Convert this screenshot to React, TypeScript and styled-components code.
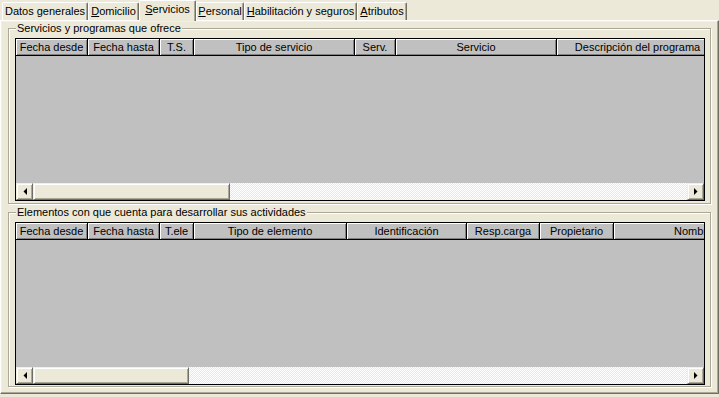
import React from "react";
import styled, { createGlobalStyle } from "styled-components";

const Global = createGlobalStyle`
  html, body { margin: 0; padding: 0; background: #ece9d8; }
  body { font-family: Tahoma, "Liberation Sans", "DejaVu Sans", sans-serif; font-size: 11px; color: #000; }
  * { box-sizing: border-box; }
`;

const Window = styled.div`
  width: 719px;
  height: 397px;
  display: flex;
  flex-direction: column;
  background: #ece9d8;
`;

const TabStrip = styled.div`
  height: 20px;
  display: flex;
  align-items: flex-end;
  padding-left: 2px;
  position: relative;
  z-index: 1;
`;

const Tab = styled.div<{ $w: number; $active?: boolean }>`
  width: ${(p) => p.$w}px;
  height: ${(p) => (p.$active ? 21 : 18)}px;
  margin-bottom: ${(p) => (p.$active ? -1 : 0)}px;
  background: #ece9d8;
  border-left: 1px solid #fff;
  border-top: 1px solid #fff;
  border-right: 1px solid #716f64;
  border-radius: 2px 2px 0 0;
  box-shadow: inset -1px 0 0 #aca899;
  display: flex;
  align-items: ${(p) => (p.$active ? "flex-start" : "center")};
  padding-top: ${(p) => (p.$active ? 2 : 0)}px;
  justify-content: center;
  white-space: nowrap;
  line-height: 13px;
`;

const TabLabel = styled.span`
  white-space: pre;
  u { text-decoration: underline; }
`;

const Panel = styled.div`
  flex: 1;
  margin-bottom: 3px;
  border-left: 1px solid #fff;
  border-top: 1px solid #fff;
  border-right: 1px solid #716f64;
  border-bottom: 1px solid #716f64;
  box-shadow: inset -1px -1px 0 #aca899, inset 1px 1px 0 #f1efe2;
  padding: 7px 0 0 7px;
  display: flex;
  flex-direction: column;
  gap: 8px;
`;

const Group = styled.div<{ $h: number }>`
  position: relative;
  width: 703px;
  height: ${(p) => p.$h}px;
  border: 1px solid #aca899;
  box-shadow: inset 1px 1px 0 #fff, 1px 1px 0 #fff;
  padding: 9px 0 0 6px;
`;

const Legend = styled.span`
  position: absolute;
  top: -7px;
  left: 7px;
  padding: 0 1px 0 1px;
  background: #ece9d8;
  line-height: 13px;
  white-space: nowrap;
`;

const Grid = styled.div`
  width: 690px;
  height: 163px;
  border: 1px solid #000;
  background: #c0c0c0;
  display: flex;
  flex-direction: column;
  overflow: hidden;
`;

const HeaderRow = styled.div`
  display: flex;
  height: 17px;
  flex-shrink: 0;
  overflow: hidden;
`;

const HeadCell = styled.div<{ $w: number }>`
  flex: 0 0 ${(p) => p.$w}px;
  width: ${(p) => p.$w}px;
  height: 17px;
  background: #c0c0c0;
  border-right: 1px solid #000;
  border-bottom: 1px solid #000;
  box-shadow: inset 1px 1px 0 #fff, inset -1px -1px 0 #808080;
  display: flex;
  align-items: center;
  justify-content: center;
  white-space: nowrap;
  overflow: hidden;
  line-height: 13px;
  padding-top: 1px;
`;

const Body = styled.div`
  flex: 1;
  background: #c0c0c0;
`;

const ScrollBar = styled.div`
  height: 17px;
  flex-shrink: 0;
  display: flex;
  background: repeating-conic-gradient(#fff 0 25%, #ece9d8 0 50%) 0 0 / 2px 2px;
`;

const Track = styled.div`
  flex: 1;
`;

const SBtn = styled.div`
  width: 17px;
  height: 17px;
  flex-shrink: 0;
  background: #ece9d8;
  border-top: 1px solid #f1efe2;
  border-left: 1px solid #f1efe2;
  border-right: 1px solid #716f64;
  border-bottom: 1px solid #716f64;
  box-shadow: inset 1px 1px 0 #fff, inset -1px -1px 0 #aca899;
  display: flex;
  align-items: center;
  justify-content: center;
`;

const Thumb = styled.div<{ $w: number }>`
  width: ${(p) => p.$w}px;
  height: 17px;
  flex-shrink: 0;
  background: #ece9d8;
  border-top: 1px solid #f1efe2;
  border-left: 1px solid #f1efe2;
  border-right: 1px solid #716f64;
  border-bottom: 1px solid #716f64;
  box-shadow: inset 1px 1px 0 #fff, inset -1px -1px 0 #aca899;
`;

const Arrow = ({ dir }: { dir: "l" | "r" }) => (
  <svg width="4" height="7" viewBox="0 0 4 7">
    {dir === "l" ? <path d="M4 0 L4 7 L0.5 3.5 Z" fill="#000" /> : <path d="M0 0 L0 7 L3.5 3.5 Z" fill="#000" />}
  </svg>
);

type Col = { t: string; w: number };

const cols1: Col[] = [
  { t: "Fecha desde", w: 72 },
  { t: "Fecha hasta", w: 72 },
  { t: "T.S.", w: 34 },
  { t: "Tipo de servicio", w: 161 },
  { t: "Serv.", w: 41 },
  { t: "Servicio", w: 161 },
  { t: "Descripción del programa", w: 162 },
];

const cols2: Col[] = [
  { t: "Fecha desde", w: 72 },
  { t: "Fecha hasta", w: 72 },
  { t: "T.ele", w: 34 },
  { t: "Tipo de elemento", w: 153 },
  { t: "Identificación", w: 120 },
  { t: "Resp.carga", w: 73 },
  { t: "Propietario", w: 74 },
  { t: "Nombre", w: 160 },
];

const DataGrid = ({ cols, thumb }: { cols: Col[]; thumb: number }) => (
  <Grid>
    <HeaderRow>
      {cols.map((c) => (
        <HeadCell key={c.t} $w={c.w}>
          {c.t}
        </HeadCell>
      ))}
    </HeaderRow>
    <Body />
    <ScrollBar>
      <SBtn>
        <Arrow dir="l" />
      </SBtn>
      <Thumb $w={thumb} />
      <Track />
      <SBtn>
        <Arrow dir="r" />
      </SBtn>
    </ScrollBar>
  </Grid>
);

const tabs = [
  { w: 86, label: <>Datos <u>g</u>enerales</> },
  { w: 51, label: <><u>D</u>omicilio</> },
  { w: 57, label: <><u>S</u>ervicios</>, active: true },
  { w: 48, label: <><u>P</u>ersonal</> },
  { w: 113, label: <><u>H</u>abilitación y seguros</> },
  { w: 50, label: <><u>A</u>tributos</> },
];

export default function App() {
  return (
    <Window>
      <Global />
      <TabStrip>
        {tabs.map((t, i) => (
          <Tab key={i} $w={t.w} $active={t.active}>
            <TabLabel>{t.label}</TabLabel>
          </Tab>
        ))}
      </TabStrip>
      <Panel>
        <Group $h={176}>
          <Legend>Servicios y programas que ofrece</Legend>
          <DataGrid cols={cols1} thumb={197} />
        </Group>
        <Group $h={175}>
          <Legend>Elementos con que cuenta para desarrollar sus actividades</Legend>
          <DataGrid cols={cols2} thumb={156} />
        </Group>
      </Panel>
    </Window>
  );
}
